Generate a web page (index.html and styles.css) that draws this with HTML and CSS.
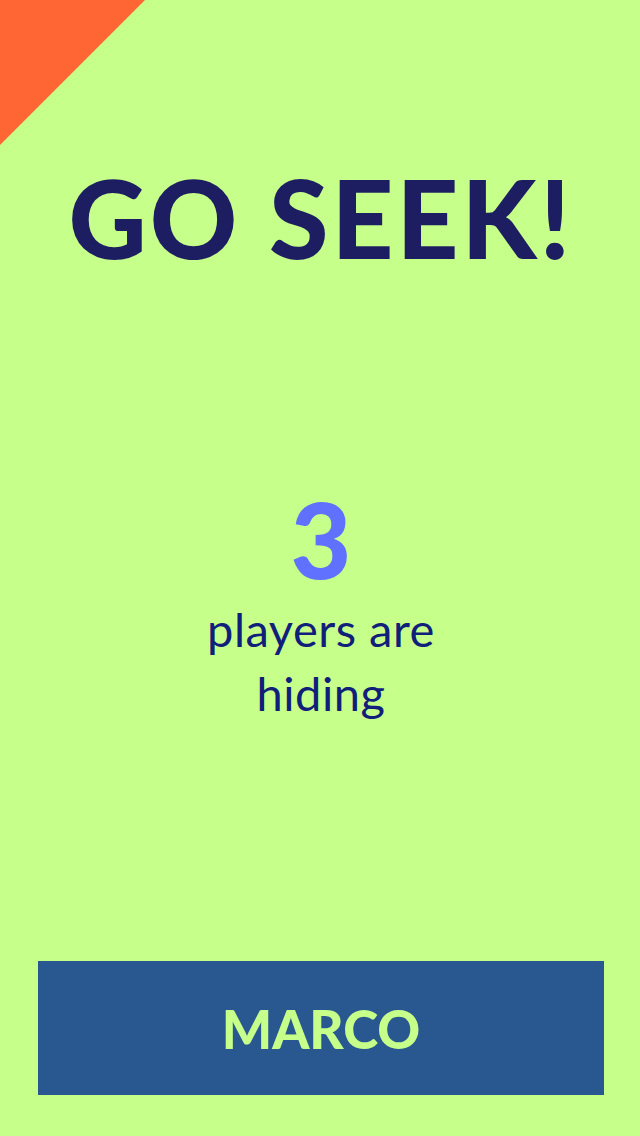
FILE: index.html
```html
<!DOCTYPE html>
<html>
<head>
<meta charset="utf-8">
<link rel="stylesheet" href="styles.css">
</head>
<body>
<div class="screen">
  <div class="corner"></div>
  <h1 class="title">GO SEEK!</h1>
  <div class="status">
    <div class="count">3</div>
    <div class="label">players are<br>hiding</div>
  </div>
  <button class="marco">MARCO</button>
</div>
</body>
</html>
```
FILE: styles.css
```css
* { box-sizing: border-box; }
html, body { margin: 0; padding: 0; }
body {
  width: 640px;
  height: 1136px;
  background: #c6ff8a;
  font-family: Lato, "Open Sans", sans-serif;
  overflow: hidden;
}
.screen {
  position: relative;
  height: 1136px;
  display: flex;
  flex-direction: column;
  align-items: center;
  padding: 0 36px 41px 38px;
}
.corner {
  position: absolute;
  left: 0;
  top: 0;
  width: 145px;
  height: 145px;
  background: #ff6633;
  clip-path: polygon(0 0, 100% 0, 0 100%);
}
.title {
  margin: 157px 0 0;
  font-size: 108px;
  font-weight: 900;
  line-height: 120px;
  color: #1d1d62;
  letter-spacing: 3px;
  text-align: center;
}
.status {
  margin-top: 206px;
  text-align: center;
  flex: 1;
}
.count {
  font-size: 105px;
  font-weight: 900;
  line-height: 110px;
  color: #6070ff;
}
.label {
  font-size: 47px;
  line-height: 64px;
  letter-spacing: 0.5px;
  color: #10207a;
  margin-top: 4px;
}
.marco {
  width: 100%;
  height: 134px;
  border: none;
  background: #28588f;
  color: #c6ff8a;
  font-family: Lato, "Open Sans", sans-serif;
  font-size: 53px;
  font-weight: 900;
  padding: 0;
}
```
